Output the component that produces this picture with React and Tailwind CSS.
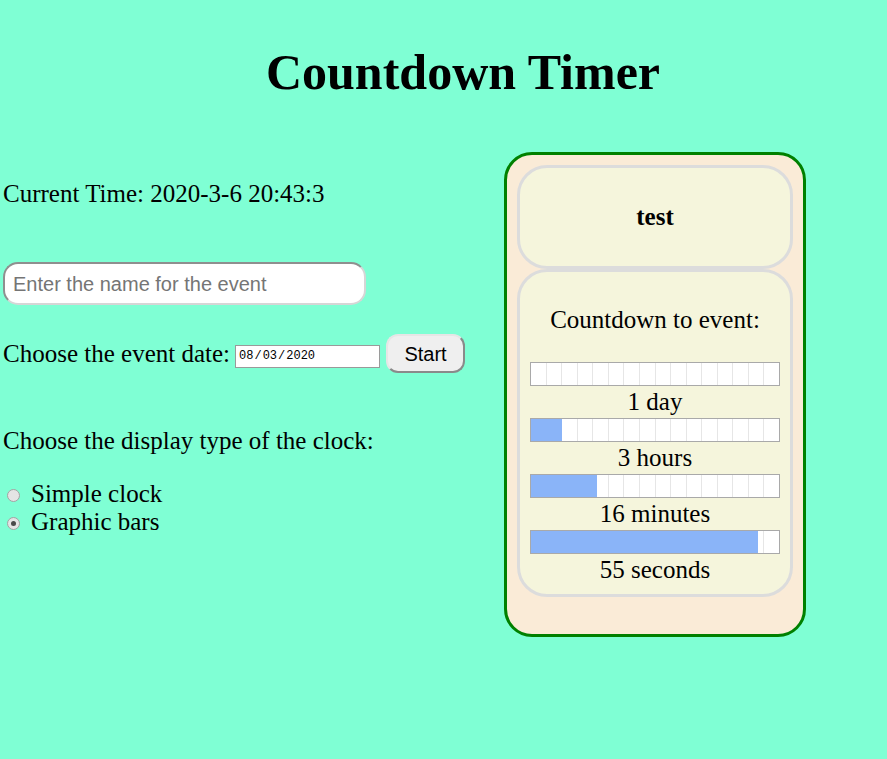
const BARS = [
  { label: '1 day', value: 0 },
  { label: '3 hours', value: 3 / 24 },
  { label: '16 minutes', value: 16 / 60 },
  { label: '55 seconds', value: 55 / 60 },
];

function Bar({ value }) {
  return (
    <div className="relative mx-[10px] h-[24px] border border-[#a9a9a9] bg-white">
      <div className="flex h-full">
        {Array.from({ length: 16 }).map((_, i) => (
          <div key={i} className={`flex-1 ${i < 15 ? 'border-r border-[#e6e6e6]' : ''}`} />
        ))}
      </div>
      <div className="absolute left-0 top-0 h-full bg-[#8ab4f8]" style={{ width: `${value * 100}%` }} />
    </div>
  );
}

function Radio({ checked, label }) {
  return (
    <div className="flex items-center h-[28px] leading-[28px]">
      <span className="ml-[4px] mt-[3px] flex h-[13px] w-[13px] items-center justify-center rounded-full border border-[#a3a3a3] bg-[#e4e4e4]">
        {checked && <span className="h-[5px] w-[5px] rounded-full bg-[#4a4a4a]" />}
      </span>
      <span className="ml-[11px]">{label}</span>
    </div>
  );
}

export default function App() {
  return (
    <div className="min-h-screen bg-[#7fffd4] font-['Liberation_Serif','Times_New_Roman',serif] text-[25px] text-black">
      <h1 className="pt-[47px] pl-[39px] text-center text-[50px] leading-[50px] font-bold">Countdown Timer</h1>

      <div className="mt-[55px] flex">
        {/* left: controls */}
        <div className="w-[504px] pl-[3px]">
          <p className="mt-[27px] leading-[29px]">Current Time: 2020-3-6 20:43:3</p>

          <div className="mt-[54px] flex h-[43px] w-[363px] items-center rounded-[15px] border-2 border-t-[#8f8f8f] border-l-[#8f8f8f] border-b-[#d6d6d6] border-r-[#d6d6d6] bg-white pl-[8px] font-['Liberation_Sans',Arial,sans-serif] text-[20px] text-[#757575]">
            Enter the name for the event
          </div>

          <div className="mt-[29px] flex items-center">
            <span className="leading-[29px]">Choose the event date:</span>
            <div className="ml-[5px] mt-[5px] flex h-[23px] w-[145px] items-center border border-[#9a9a9a] bg-white pl-[3px] font-['Liberation_Mono',monospace] text-[12px]">
              <span>08</span>
              <span className="mx-[1px]">/</span>
              <span>03</span>
              <span className="mx-[1px]">/</span>
              <span>2020</span>
            </div>
            <button className="ml-[6px] h-[39px] w-[79px] rounded-[12px] border-2 border-t-[#e6e6e6] border-l-[#e6e6e6] border-b-[#8a8a8a] border-r-[#8a8a8a] bg-[#efefef] font-['Liberation_Sans',Arial,sans-serif] text-[20px] text-black">
              Start
            </button>
          </div>

          <p className="mt-[53px] leading-[29px]">Choose the display type of the clock:</p>

          <div className="mt-[25px]">
            <Radio label="Simple clock" />
            <Radio label="Graphic bars" checked />
          </div>
        </div>

        {/* right: countdown card */}
        <div className="h-[485px] w-[302px] rounded-[28px] border-[3px] border-[#008000] bg-[#faebd7] px-[10px] pt-[10px]">
          <div className="flex h-[104px] items-center justify-center rounded-[30px] border-[3px] border-[#dcdcdc] bg-[#f5f5dc] font-bold">
            test
          </div>
          <div className="h-[328px] rounded-[30px] border-[3px] border-[#dcdcdc] bg-[#f5f5dc] pt-[33px] text-center">
            <p className="leading-[29px]">Countdown to event:</p>
            <div className="mt-[28px]">
              {BARS.map(b => (
                <div key={b.label}>
                  <Bar value={b.value} />
                  <div className="h-[32px] leading-[32px]">{b.label}</div>
                </div>
              ))}
            </div>
          </div>
        </div>
      </div>
    </div>
  );
}
